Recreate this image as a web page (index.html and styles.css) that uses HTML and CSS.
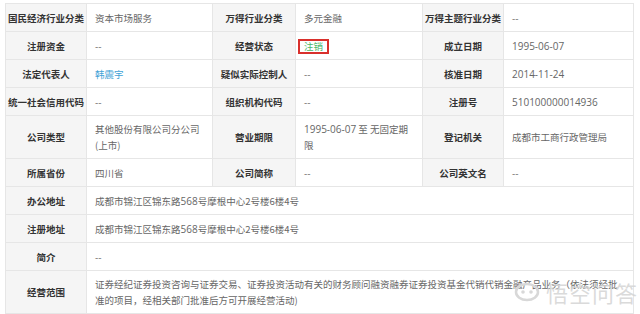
FILE: index.html
```html
<!DOCTYPE html>
<html lang="zh">
<head>
<meta charset="utf-8">
<link rel="stylesheet" href="styles.css">
</head>
<body>
<div class="wrap">
<table class="info">
<colgroup>
<col class="c-l1"><col class="c-v1"><col class="c-l2"><col class="c-v2"><col class="c-l3"><col class="c-v3">
</colgroup>
<tr>
<th>国民经济行业分类</th><td>资本市场服务</td>
<th>万得行业分类</th><td>多元金融</td>
<th>万得主题行业分类</th><td>--</td>
</tr>
<tr>
<th>注册资金</th><td>--</td>
<th>经营状态</th><td><span class="status">注销</span></td>
<th>成立日期</th><td><span class="num">1995-06-07</span></td>
</tr>
<tr>
<th>法定代表人</th><td><span class="link">韩震宇</span></td>
<th>疑似实际控制人</th><td>--</td>
<th>核准日期</th><td><span class="num">2014-11-24</span></td>
</tr>
<tr>
<th>统一社会信用代码</th><td>--</td>
<th>组织机构代码</th><td>--</td>
<th>注册号</th><td><span class="num">510100000014936</span></td>
</tr>
<tr class="tall">
<th>公司类型</th><td>其他股份有限公司分公司(上市)</td>
<th>营业期限</th><td><span class="num">1995-06-07</span> 至 无固定期限</td>
<th>登记机关</th><td>成都市工商行政管理局</td>
</tr>
<tr>
<th>所属省份</th><td>四川省</td>
<th>公司简称</th><td>--</td>
<th>公司英文名</th><td>--</td>
</tr>
<tr>
<th>办公地址</th><td colspan="5">成都市锦江区锦东路<span class="num">568</span>号摩根中心2号楼6楼4号</td>
</tr>
<tr>
<th>注册地址</th><td colspan="5">成都市锦江区锦东路<span class="num">568</span>号摩根中心2号楼6楼4号</td>
</tr>
<tr>
<th>简介</th><td colspan="5">--</td>
</tr>
<tr class="tall">
<th>经营范围</th><td colspan="5">证券经纪证券投资咨询与证券交易、证券投资活动有关的财务顾问融资融券证券投资基金代销代销金融产品业务（依法须经批准的项目，经相关部门批准后方可开展经营活动)</td>
</tr>
</table>
<div class="watermark">
<svg class="wm-logo" width="26" height="22" viewBox="0 0 26 22"><ellipse cx="13" cy="11" rx="11" ry="8" fill="none" stroke="#d8d8d8" stroke-width="2.5"/><circle cx="9" cy="11" r="1.8" fill="#d8d8d8"/><circle cx="17" cy="11" r="1.8" fill="#d8d8d8"/></svg>
<span>悟空问答</span>
</div>
</div>
</body>
</html>
```
FILE: styles.css
```css
html, body {
  margin: 0;
  padding: 0;
  background: #ffffff;
  overflow: hidden;
}
body {
  font-family: "Noto Sans CJK SC", "Noto Sans", sans-serif;
  font-size: 9.5px;
}
.wrap {
  position: relative;
  padding: 3px 0 0 5px;
}
.info {
  border-collapse: collapse;
  table-layout: fixed;
  width: 628px;
}
.c-l1 { width: 81px; }
.c-v1 { width: 126px; }
.c-l2 { width: 83px; }
.c-v2 { width: 127px; }
.c-l3 { width: 81px; }
.c-v3 { width: 130px; }
.info th, .info td {
  border: 1px solid #e6e6e6;
  padding: 5px 8px;
  line-height: 16px;
  height: 17px;
  vertical-align: middle;
}
.info th {
  background: #f5f5f5;
  color: #333333;
  font-weight: bold;
  text-align: center;
  padding: 5px 1px;
  white-space: nowrap;
}
.info td {
  background: #ffffff;
  color: #666666;
  text-align: left;
  font-weight: normal;
}
.num {
  font-family: "Open Sans", "Noto Sans", sans-serif;
  font-size: 10px;
}
.link {
  color: #3fa2d6;
}
.status {
  color: #4cb86a;
  border: 2px solid #d9302c;
  padding: 0 4px;
  margin-left: -6px;
  line-height: 11px;
  display: inline-block;
}
.watermark {
  position: absolute;
  left: 514px;
  top: 280px;
  display: flex;
  align-items: center;
  gap: 6px;
  white-space: nowrap;
  color: rgba(212, 212, 212, 0.85);
  font-size: 22px;
  line-height: 24px;
  letter-spacing: 1px;
}
```
